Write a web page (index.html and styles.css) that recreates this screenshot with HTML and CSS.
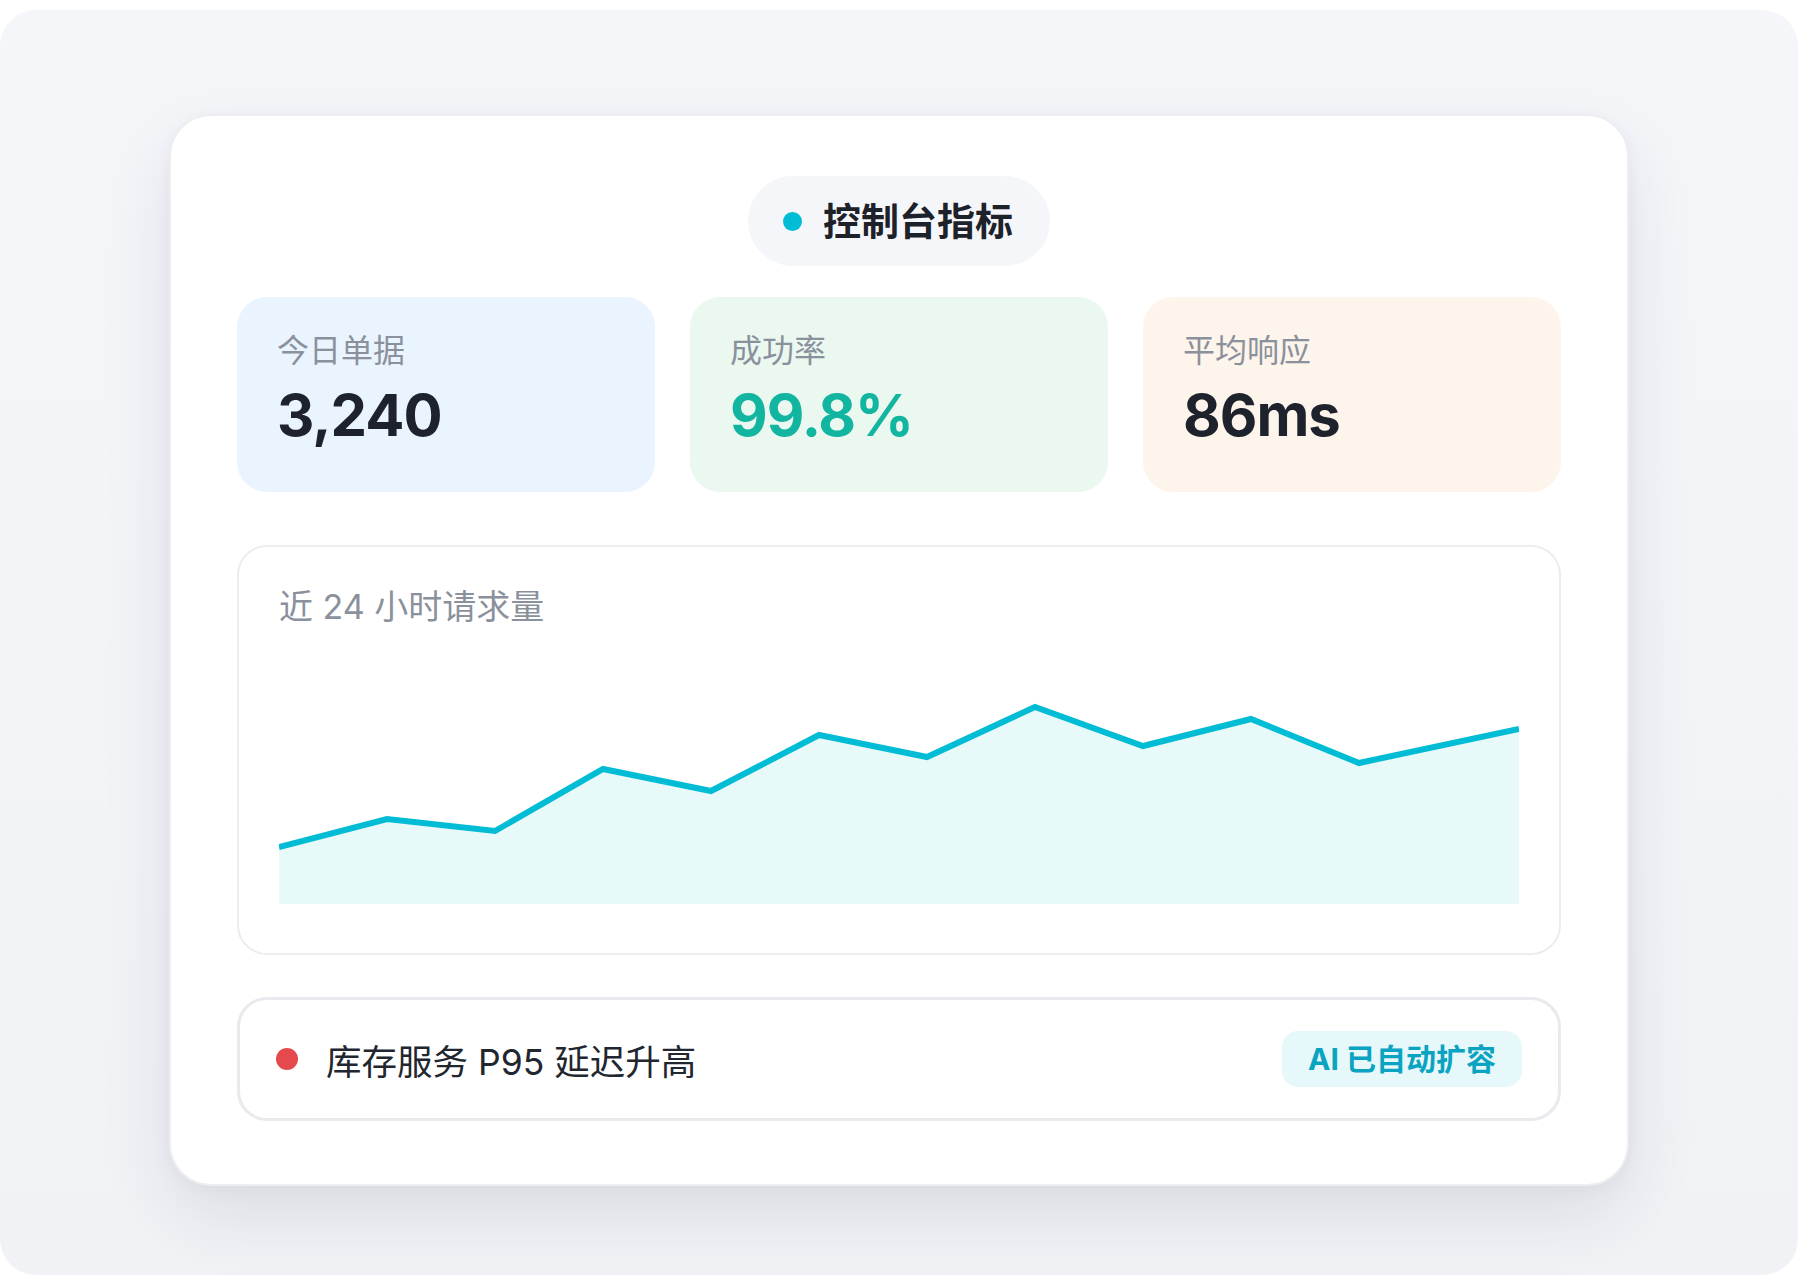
FILE: index.html
```html
<!DOCTYPE html>
<html lang="zh-CN">
<head>
<meta charset="UTF-8" />
<meta name="viewport" content="width=device-width, initial-scale=1.0" />
<title>控制台指标</title>
<link rel="stylesheet" href="styles.css">
</head>
<body>
<div class="stage">
  <section class="panel">
    <!-- Title pill -->
    <header class="panel-title">
      <span class="title-dot"></span>
      <h1>控制台指标</h1>
    </header>

    <!-- Stat cards -->
    <div class="stats">
      <div class="stat stat-blue">
        <div class="stat-label">今日单据</div>
        <div class="stat-value">3,240</div>
      </div>
      <div class="stat stat-green">
        <div class="stat-label">成功率</div>
        <div class="stat-value value-ok">99.8%</div>
      </div>
      <div class="stat stat-orange">
        <div class="stat-label">平均响应</div>
        <div class="stat-value">86ms</div>
      </div>
    </div>

    <!-- Request chart -->
    <div class="chart-box">
      <div class="chart-title">近 24 小时请求量</div>
      <svg class="chart" viewBox="0 0 1240 254" preserveAspectRatio="none">
        <polygon class="chart-area" points="0,197 108,169 216,181 324,119 432,141 540,85 648,107 756,57 864,96 972,69 1080,113 1240,79 1240,254 0,254" />
        <polyline class="chart-line" points="0,197 108,169 216,181 324,119 432,141 540,85 648,107 756,57 864,96 972,69 1080,113 1240,79" />
      </svg>
    </div>

    <!-- Alert row -->
    <div class="alert">
      <span class="alert-dot"></span>
      <span class="alert-text">库存服务 P95 延迟升高</span>
      <span class="alert-badge">AI 已自动扩容</span>
    </div>
  </section>
</div>
</body>
</html>
```

FILE: styles.css
```css
/* General Styling */
* {
  box-sizing: border-box;
}
body {
  margin: 0;
  padding: 10px 0 0;
  background-color: #fff;
  font-family: Inter, "Noto Sans CJK SC", sans-serif;
  color: #1e222b;
}
.stage {
  width: 1798px;
  height: 1265px;
  padding-top: 104px;
  border-radius: 36px;
  background: linear-gradient(180deg, #f5f6fa 0%, #f1f2f6 100%);
}

/* Main card */
.panel {
  width: 1460px;
  margin: 0 auto;
  padding: 60px 66px 63px;
  background-color: #fff;
  border: 2px solid #eceef1;
  border-radius: 42px;
  box-shadow: 0 30px 70px rgba(30, 40, 70, 0.10), 0 4px 14px rgba(30, 40, 70, 0.04);
}

/* Title pill */
.panel-title {
  display: flex;
  align-items: center;
  gap: 21px;
  width: fit-content;
  height: 90px;
  margin: 0 auto;
  padding: 0 37px 0 35px;
  background-color: #f5f6fa;
  border-radius: 45px;
}
.title-dot {
  width: 19px;
  height: 19px;
  border-radius: 50%;
  background-color: #00bcd4;
}
.panel-title h1 {
  margin: 0;
  font-size: 38px;
  font-weight: 700;
  line-height: 1;
  color: #1d2129;
}

/* Stat cards */
.stats {
  display: grid;
  grid-template-columns: repeat(3, 1fr);
  gap: 35px;
  margin-top: 31px;
}
.stat {
  height: 195px;
  padding: 34px 40px;
  border-radius: 30px;
}
.stat-blue {
  background-color: #eaf4fe;
}
.stat-green {
  background-color: #eaf8f0;
}
.stat-orange {
  background-color: #fdf5eb;
}
.stat-label {
  font-size: 32px;
  line-height: 40px;
  color: #8b919c;
}
.stat-value {
  margin-top: 15px;
  font-size: 58px;
  font-weight: 700;
  line-height: 1;
  letter-spacing: -1px;
  color: #1e222d;
}
.value-ok {
  color: #12b5a0;
}

/* Chart */
.chart-box {
  margin-top: 53px;
  padding: 38px 40px 49px;
  border: 2px solid #ebedf0;
  border-radius: 30px;
}
.chart-title {
  font-size: 34px;
  line-height: 44px;
  color: #8b919c;
}
.chart {
  display: block;
  width: 1240px;
  height: 254px;
  margin-top: 21px;
}
.chart-area {
  fill: #e8f9fa;
}
.chart-line {
  fill: none;
  stroke: #00bcd4;
  stroke-width: 6;
}

/* Alert row */
.alert {
  display: flex;
  align-items: center;
  height: 124px;
  margin-top: 42px;
  padding: 0 36px;
  border: 3px solid #e9eaed;
  border-radius: 30px;
}
.alert-dot {
  width: 22px;
  height: 22px;
  border-radius: 50%;
  background-color: #e5484d;
}
.alert-text {
  margin-left: 28px;
  font-size: 35.5px;
  color: #22262f;
}
.alert-badge {
  margin-left: auto;
  padding: 0 26px;
  height: 56px;
  line-height: 56px;
  border-radius: 16px;
  background-color: #e6f8fa;
  color: #0aa3c2;
  font-size: 30px;
  font-weight: 700;
}
```
